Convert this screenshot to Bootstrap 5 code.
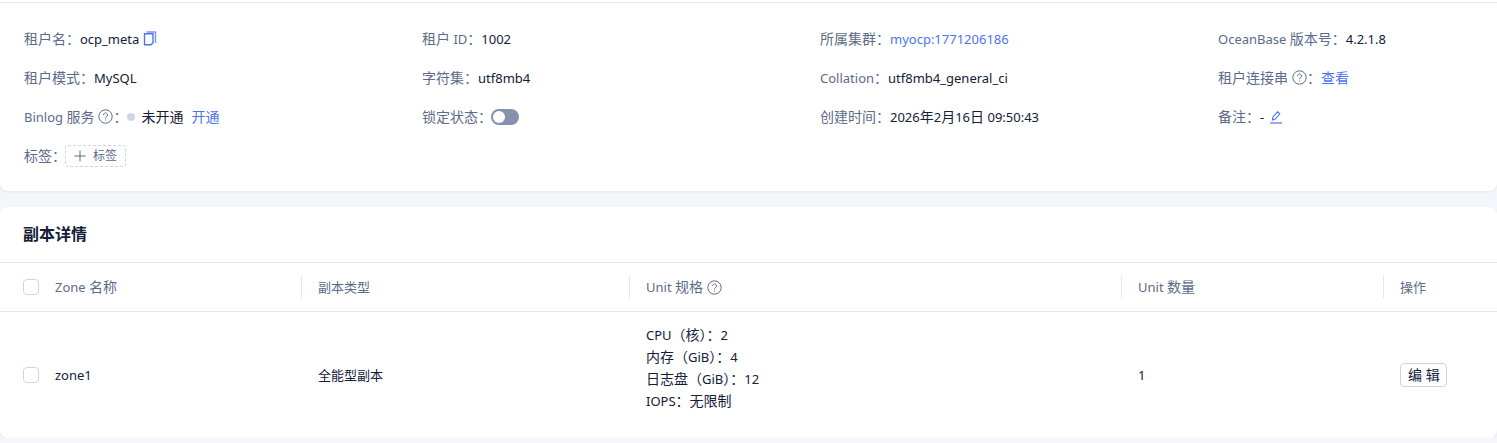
<!DOCTYPE html>
<html lang="zh-CN">
<head>
  <meta charset="UTF-8">
  <meta name="viewport" content="width=device-width, initial-scale=1.0">
  <title>租户详情</title>
  <link href="https://cdn.jsdelivr.net/npm/bootstrap@5.3.0/dist/css/bootstrap.min.css" rel="stylesheet">
  <style>
    body {
      background: #f4f6fb;
      font-family: "Noto Sans", "Noto Sans CJK SC", sans-serif;
      font-size: 13px;
      line-height: 20px;
      color: #132039;
      overflow: hidden;
    }
    .zh { font-size: 14px; }
    .top-strip { height: 2px; background: #fff; }
    .panel {
      background: #fff;
      border-radius: 8px;
      box-shadow: 0 1px 3px rgba(19, 32, 57, .08);
    }
    .info-panel {
      height: 189px;
      padding: 16px 24px 0;
      border-top: 1px solid #e2e8f3;
      border-radius: 0 0 8px 8px;
    }
    .info-grid { display: grid; grid-template-columns: 398px 398px 398px 1fr; grid-auto-rows: 39px; }
    .info-item { display: flex; align-items: center; white-space: nowrap; height: 39px; }
    .lbl { color: #5c6b8a; }
    .lnk { color: #4c73f2; text-decoration: none; }
    .ico-help { width: 15px; height: 15px; margin: 0 0 0 4px; flex: none; }
    .ico-copy { width: 14px; height: 15px; margin-left: 4px; }
    .ico-edit { width: 14px; height: 14px; margin-left: 5px; }
    .dot { width: 8px; height: 8px; border-radius: 50%; background: #cdd5e4; margin: 0 6px 0 0; }
    .lock-switch {
      width: 28px; height: 16px; border-radius: 8px; background: #8592ad;
      position: relative; display: inline-block; margin-left: -1px;
    }
    .lock-switch::after {
      content: ""; position: absolute; left: 2px; top: 2px;
      width: 12px; height: 12px; border-radius: 50%; background: #fff;
    }
    .tag-add {
      display: inline-flex; align-items: center; height: 22px; padding: 0 8px;
      border: 1px dashed #cdd5e4; border-radius: 3px; color: #5c6b8a; font-size: 12px;
      margin-left: -1px;
    }
    .tag-add svg { width: 12px; height: 12px; margin-right: 7px; }
    .replica-panel { margin-top: 16px; height: 231px; overflow: hidden; }
    .panel-title { height: 55px; padding: 0 23px 1px; display: flex; align-items: center; font-size: 16px; font-weight: 600; color: #132039; }
    .replica-table { table-layout: fixed; margin: 0; border-top: 1px solid #e2e8f3; }
    .replica-table th, .replica-table td { padding: 0 16px; border: 0; vertical-align: middle; background: transparent; color: #132039; font-size: 13px; line-height: 22px; }
    .replica-table thead tr { height: 49px; border-bottom: 1px solid #e2e8f3; }
    .replica-table th { font-weight: 400; color: #5c6b8a; position: relative; }
    .replica-table th + th::before {
      content: ""; position: absolute; left: -1px; top: 13px; height: 22px; width: 1px; background: #e2e8f3;
    }
    .replica-table tbody tr { height: 126px; }
    .replica-table .spec-cell { padding-bottom: 14px; }
    .chk { display: inline-block; width: 16px; height: 16px; border: 1px solid #cdd5e4; border-radius: 4px; background: #fff; margin-right: 16px; vertical-align: -3px; }
    .replica-table .first-cell { padding-left: 23px; }
    .edit-btn {
      font-size: 14px; line-height: 20px; padding: 1px 7px; border: 1px solid #cdd5e4; border-radius: 4px;
      color: #132039; background: #fff; width: 47px; white-space: nowrap;
    }
  </style>
</head>
<body>
  <div class="top-strip"></div>
  <div class="panel info-panel">
    <div class="info-grid">
      <div class="info-item"><span class="lbl zh">租户名：</span>ocp_meta
        <svg class="ico-copy" viewBox="0 0 14 15" fill="none" stroke="#4c73f2"><path d="M3.5 1h9v11" stroke-width="1.4" stroke-opacity=".75"/><path d="M1.5 2.7h8.5v9l-2 2H1.5z" stroke-width="1.4"/></svg>
      </div>
      <div class="info-item"><span class="lbl"><span class="zh">租户</span> ID<span class="zh">：</span></span>1002</div>
      <div class="info-item"><span class="lbl zh">所属集群：</span><a class="lnk" href="#">myocp:1771206186</a></div>
      <div class="info-item"><span class="lbl">OceanBase <span class="zh">版本号：</span></span>4.2.1.8</div>

      <div class="info-item"><span class="lbl zh">租户模式：</span>MySQL</div>
      <div class="info-item"><span class="lbl zh">字符集：</span>utf8mb4</div>
      <div class="info-item"><span class="lbl">Collation<span class="zh">：</span></span>utf8mb4_general_ci</div>
      <div class="info-item"><span class="lbl zh">租户连接串</span>
        <svg class="ico-help" viewBox="0 0 15 15" fill="none" stroke="#5c6b8a"><circle cx="7.5" cy="7.5" r="6.7"/><path d="M5.5 6a2 2 0 1 1 3.1 1.7c-.8.5-1.1.9-1.1 1.6"/><path d="M7.5 10.5v1"/></svg>
        <span class="lbl zh">：</span><a class="lnk zh" href="#">查看</a>
      </div>

      <div class="info-item"><span class="lbl">Binlog <span class="zh">服务</span></span>
        <svg class="ico-help" viewBox="0 0 15 15" fill="none" stroke="#5c6b8a"><circle cx="7.5" cy="7.5" r="6.7"/><path d="M5.5 6a2 2 0 1 1 3.1 1.7c-.8.5-1.1.9-1.1 1.6"/><path d="M7.5 10.5v1"/></svg>
        <span class="lbl zh">：</span><span class="dot"></span><span class="zh">未开通</span><a class="lnk zh ms-2" href="#">开通</a>
      </div>
      <div class="info-item"><span class="lbl zh">锁定状态：</span><span class="lock-switch"></span></div>
      <div class="info-item"><span class="lbl zh">创建时间：</span>2026<span class="zh">年</span>2<span class="zh">月</span>16<span class="zh">日</span>&nbsp;09:50:43</div>
      <div class="info-item"><span class="lbl zh">备注：</span>-
        <svg class="ico-edit" viewBox="0 0 14 14" fill="none" stroke="#4c73f2"><path d="M3.5 10l.4-3 4.6-5.2 2.3 2-4.6 5.2z" stroke-width="1.1"/><path d="M1 13h12" stroke-width="1.2"/></svg>
      </div>

      <div class="info-item"><span class="lbl zh">标签：</span>
        <span class="tag-add">
          <svg viewBox="0 0 12 12" fill="none" stroke="#5c6b8a"><path d="M6 .5v11M.5 6h11"/></svg>标签
        </span>
      </div>
    </div>
  </div>

  <div class="panel replica-panel">
    <div class="panel-title">副本详情</div>
    <table class="table replica-table">
      <colgroup>
        <col style="width: 302px"><col style="width: 328px"><col style="width: 492px"><col style="width: 262px"><col style="width: 113px">
      </colgroup>
      <thead>
        <tr>
          <th class="first-cell"><span class="chk"></span>Zone <span class="zh">名称</span></th>
          <th class="zh">副本类型</th>
          <th>Unit <span class="zh">规格</span><svg class="ico-help" viewBox="0 0 15 15" fill="none" stroke="#5c6b8a" style="vertical-align: -3px"><circle cx="7.5" cy="7.5" r="6.7"/><path d="M5.5 6a2 2 0 1 1 3.1 1.7c-.8.5-1.1.9-1.1 1.6"/><path d="M7.5 10.5v1"/></svg></th>
          <th>Unit <span class="zh">数量</span></th>
          <th class="zh">操作</th>
        </tr>
      </thead>
      <tbody>
        <tr>
          <td class="first-cell"><span class="chk"></span>zone1</td>
          <td class="zh">全能型副本</td>
          <td class="spec-cell">
            <div>CPU<span class="zh">（核）：</span>2</div>
            <div><span class="zh">内存（</span>GiB<span class="zh">）：</span>4</div>
            <div><span class="zh">日志盘（</span>GiB<span class="zh">）：</span>12</div>
            <div>IOPS<span class="zh">：无限制</span></div>
          </td>
          <td>1</td>
          <td><button type="button" class="btn edit-btn">编 辑</button></td>
        </tr>
      </tbody>
    </table>
  </div>
  <script src="https://cdn.jsdelivr.net/npm/bootstrap@5.3.0/dist/js/bootstrap.bundle.min.js"></script>
</body>
</html>
